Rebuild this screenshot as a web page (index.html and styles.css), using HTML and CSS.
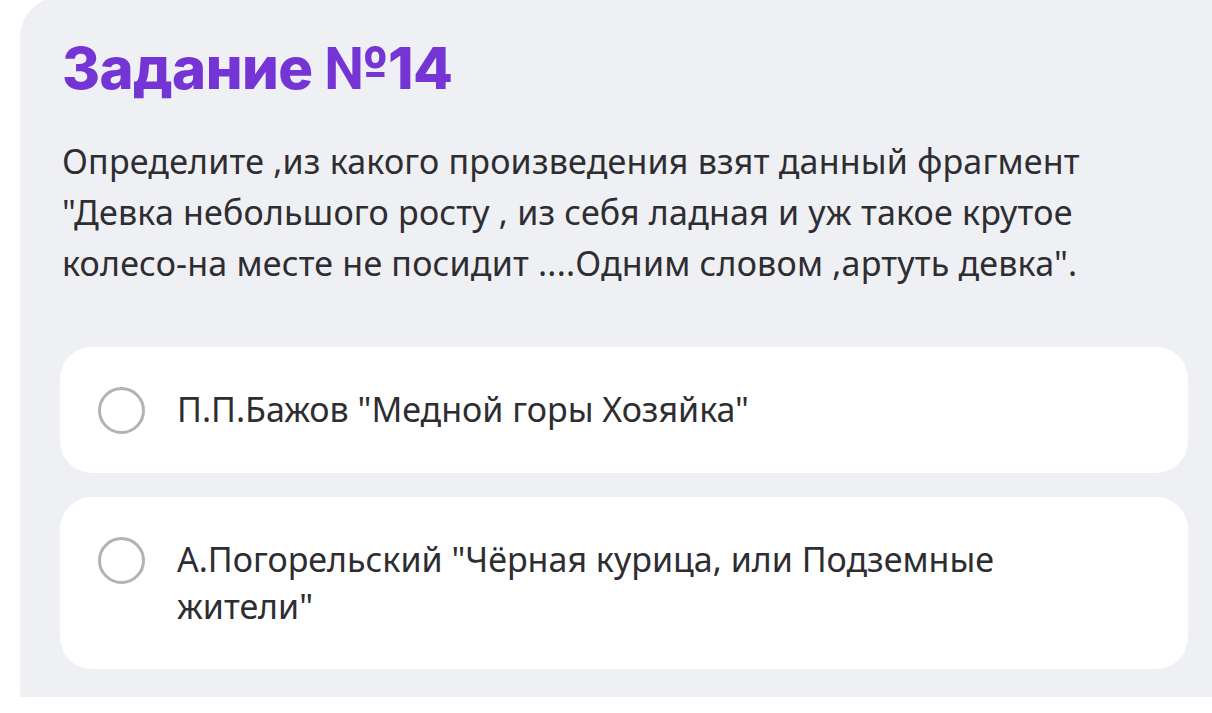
FILE: index.html
```html
<!DOCTYPE html>
<html lang="ru">
<head>
    <meta charset="UTF-8">
    <meta name="viewport" content="width=device-width, initial-scale=1.0">
    <title>Задание №14</title>
    <link rel="stylesheet" href="styles.css">
</head>
<body>
    <div class="page">
        <section class="task">
            <h1 class="task-title">Задание №14</h1>
            <p class="task-text">Определите ,из какого произведения взят данный фрагмент "Девка небольшого росту , из себя ладная и уж такое крутое колесо-на месте не посидит ....Одним словом ,артуть девка".</p>
            <div class="answers">
                <label class="answer">
                    <input type="radio" name="q14" class="answer-radio">
                    <span class="answer-mark"></span>
                    <span class="answer-text">П.П.Бажов "Медной горы Хозяйка"</span>
                </label>
                <label class="answer">
                    <input type="radio" name="q14" class="answer-radio">
                    <span class="answer-mark"></span>
                    <span class="answer-text">А.Погорельский "Чёрная курица, или Подземные жители"</span>
                </label>
            </div>
        </section>
    </div>
</body>
</html>
```

FILE: styles.css
```css
body, html {
    margin: 0;
    padding: 0;
    background-color: #ffffff;
    font-family: "Noto Sans", "Open Sans", sans-serif;
    color: #2d2d32;
}
.page {
    padding-left: 20px;
    height: 713px;
    box-sizing: border-box;
}
.task {
    background-color: #eff0f3;
    border-top-left-radius: 40px;
    margin-top: -3px;
    margin-right: -40px;
    padding: 36px 64px 28px 40px;
    height: 700px;
    box-sizing: border-box;
}
.task-title {
    margin: 0 0 0 2px;
    font-family: Inter, sans-serif;
    font-weight: 800;
    font-size: 58px;
    line-height: 70px;
    letter-spacing: -0.6px;
    color: #7435d4;
}
.task-text {
    margin: 33px 0 0 2px;
    font-size: 34px;
    line-height: 51px;
    letter-spacing: 0.2px;
    max-width: 1090px;
}
.answers {
    display: flex;
    flex-direction: column;
    gap: 24px;
    margin-top: 58px;
}
.answer {
    display: flex;
    align-items: flex-start;
    background-color: #ffffff;
    border-radius: 32px;
    padding: 39px 40px 39px 38px;
    cursor: pointer;
}
.answer-radio {
    display: none;
}
.answer-mark {
    flex: none;
    width: 41px;
    height: 41px;
    border: 3px solid #b3b3b3;
    border-radius: 50%;
    margin-top: 1px;
    margin-right: 32px;
}
.answer-text {
    font-size: 34px;
    line-height: 47px;
    max-width: 880px;
}
```
